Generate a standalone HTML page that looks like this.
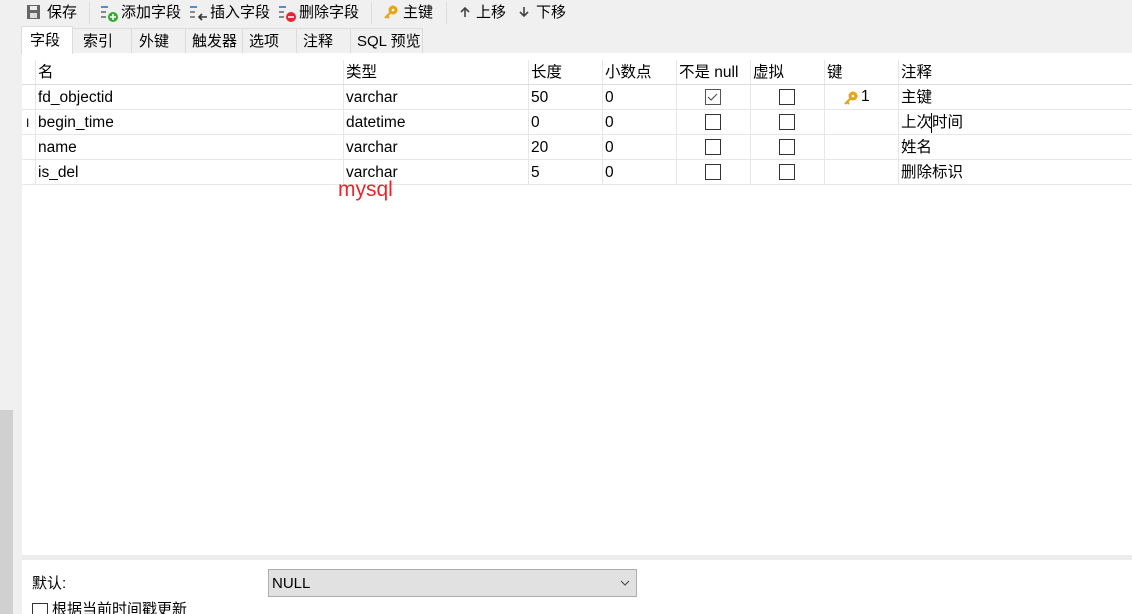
<!DOCTYPE html><html><head><meta charset="utf-8"><style>
html,body{margin:0;width:1132px;height:614px;overflow:hidden}
body{background:#f0f0f0;font-family:"Liberation Sans","Noto Sans CJK SC",sans-serif;font-size:15px;line-height:18px;color:#000;position:relative}
.a{position:absolute;white-space:nowrap}
.g{font-size:15.5px}
.tab{position:absolute;top:28px;height:25px;line-height:25px;border:1px solid #dcdcdc;border-bottom:none;background:#f0f0f0;padding-left:5px;box-sizing:border-box;overflow:hidden;white-space:nowrap}
.cb{position:absolute;width:14px;height:14px;border:1px solid #333;background:#fff}
.vl{position:absolute;top:60px;height:125px;width:1px;background:#e6e6e6}
.hl{position:absolute;left:22px;width:1110px;height:1px;background:#e6e6e6}
</style></head><body>
<div class="a" style="left:0;top:410px;width:13px;height:204px;background:#d0d0d0"></div>
<svg class="a" style="left:26px;top:4px" width="16" height="16"><rect x="1" y="1" width="13" height="14" fill="#666"/><rect x="4" y="2" width="7" height="4" fill="#eee"/><rect x="4" y="9" width="7" height="5" fill="#ddd"/></svg>
<div class="a" style="left:47px;top:4px">保存</div>
<div class="a" style="left:89px;top:2px;width:1px;height:22px;background:#ddd"></div>
<svg class="a" style="left:100px;top:4px" width="20" height="18"><rect x="1" y="2" width="7" height="2" fill="#4a90d9"/><rect x="1" y="7" width="5" height="2" fill="#888"/><rect x="1" y="12" width="5" height="2" fill="#888"/><circle cx="13" cy="13" r="5" fill="#3a3"/><path d="M10 13h6M13 10v6" stroke="#fff" stroke-width="1.6"/></svg>
<div class="a" style="left:121px;top:4px">添加字段</div>
<svg class="a" style="left:189px;top:4px" width="20" height="18"><rect x="1" y="2" width="7" height="2" fill="#4a90d9"/><rect x="1" y="7" width="5" height="2" fill="#888"/><rect x="1" y="12" width="5" height="2" fill="#888"/><path d="M18 13h-8M13 10l-3 3 3 3" stroke="#333" stroke-width="1.6" fill="none"/></svg>
<div class="a" style="left:210px;top:4px">插入字段</div>
<svg class="a" style="left:278px;top:4px" width="20" height="18"><rect x="1" y="2" width="7" height="2" fill="#4a90d9"/><rect x="1" y="7" width="5" height="2" fill="#888"/><rect x="1" y="12" width="5" height="2" fill="#888"/><circle cx="13" cy="13" r="5" fill="#e23"/><path d="M10 13h6" stroke="#fff" stroke-width="1.6"/></svg>
<div class="a" style="left:299px;top:4px">删除字段</div>
<div class="a" style="left:371px;top:2px;width:1px;height:22px;background:#ddd"></div>
<svg class="a" style="left:383px;top:4px" width="16" height="16"><circle cx="10" cy="6" r="4.5" fill="#e8a317"/><circle cx="10" cy="6" r="1.3" fill="#fff"/><path d="M7 9l-5 5M4 12l2 2" stroke="#e8a317" stroke-width="2.2"/></svg>
<div class="a" style="left:403px;top:4px">主键</div>
<div class="a" style="left:446px;top:2px;width:1px;height:22px;background:#ddd"></div>
<svg class="a" style="left:459px;top:6px" width="12" height="12"><path d="M6 11V2M2 6l4-4 4 4" stroke="#444" stroke-width="1.6" fill="none"/></svg>
<div class="a" style="left:476px;top:4px">上移</div>
<svg class="a" style="left:518px;top:6px" width="12" height="12"><path d="M6 1v9M2 6l4 4 4-4" stroke="#444" stroke-width="1.6" fill="none"/></svg>
<div class="a" style="left:536px;top:4px">下移</div>
<div class="tab" style="left:21px;top:26px;height:28px;line-height:27px;width:52px;background:#fff;border-color:#ddd;z-index:2;padding-left:8px">字段</div>
<div class="tab" style="left:72px;width:60px;padding-left:10px">索引</div>
<div class="tab" style="left:131px;width:55px;padding-left:7px">外键</div>
<div class="tab" style="left:185px;width:58px;padding-left:6px">触发器</div>
<div class="tab" style="left:242px;width:55px;padding-left:6px">选项</div>
<div class="tab" style="left:296px;width:55px;padding-left:6px">注释</div>
<div class="tab" style="left:350px;width:73px;padding-left:6px">SQL 预览</div>
<div class="a" style="left:22px;top:53px;width:1110px;height:502px;background:#fff"></div>
<div class="a" style="left:22px;top:555px;width:1110px;height:5px;background:#ececec"></div>
<div class="a" style="left:22px;top:560px;width:1110px;height:54px;background:#fff"></div>
<div class="vl" style="left:35px"></div><div class="vl" style="left:343px"></div><div class="vl" style="left:528px"></div><div class="vl" style="left:602px"></div><div class="vl" style="left:676px"></div><div class="vl" style="left:750px"></div><div class="vl" style="left:824px"></div><div class="vl" style="left:898px"></div>
<div class="hl" style="top:84px;background:#ddd"></div><div class="hl" style="top:109px"></div><div class="hl" style="top:134px"></div><div class="hl" style="top:159px"></div><div class="hl" style="top:184px"></div>
<div class="g">
<div class="a" style="left:38px;top:64px">名</div><div class="a" style="left:346px;top:64px">类型</div><div class="a" style="left:531px;top:64px">长度</div><div class="a" style="left:605px;top:64px">小数点</div><div class="a" style="left:679px;top:64px">不是 null</div><div class="a" style="left:753px;top:64px">虚拟</div><div class="a" style="left:827px;top:64px">键</div><div class="a" style="left:901px;top:64px">注释</div>
<div class="a" style="left:38px;top:89px">fd_objectid</div><div class="a" style="left:346px;top:89px">varchar</div><div class="a" style="left:531px;top:89px">50</div><div class="a" style="left:605px;top:89px">0</div><div class="a" style="left:901px;top:89px">主键</div>
<div class="a" style="left:26px;top:114px;font-size:12px">I</div>
<div class="a" style="left:38px;top:114px">begin_time</div><div class="a" style="left:346px;top:114px">datetime</div><div class="a" style="left:531px;top:114px">0</div><div class="a" style="left:605px;top:114px">0</div><div class="a" style="left:901px;top:114px">上次时间</div>
<div class="a" style="left:38px;top:139px">name</div><div class="a" style="left:346px;top:139px">varchar</div><div class="a" style="left:531px;top:139px">20</div><div class="a" style="left:605px;top:139px">0</div><div class="a" style="left:901px;top:139px">姓名</div>
<div class="a" style="left:38px;top:164px">is_del</div><div class="a" style="left:346px;top:164px">varchar</div><div class="a" style="left:531px;top:164px">5</div><div class="a" style="left:605px;top:164px">0</div><div class="a" style="left:901px;top:164px">删除标识</div>
<div class="a" style="left:861px;top:88px">1</div>
</div>
<div class="a" style="left:931px;top:113px;width:1px;height:20px;background:#000"></div>
<div class="cb" style="left:705px;top:89px;border-color:#555"></div>
<svg class="a" style="left:707px;top:92px" width="12" height="10"><path d="M1 5l3 3 6-6" stroke="#555" stroke-width="1.2" fill="none"/></svg>
<div class="cb" style="left:705px;top:114px"></div><div class="cb" style="left:705px;top:139px"></div><div class="cb" style="left:705px;top:164px"></div>
<div class="cb" style="left:779px;top:89px"></div><div class="cb" style="left:779px;top:114px"></div><div class="cb" style="left:779px;top:139px"></div><div class="cb" style="left:779px;top:164px"></div>
<svg class="a" style="left:843px;top:90px" width="16" height="16"><circle cx="10" cy="6" r="4.5" fill="#e8a317"/><circle cx="10" cy="6" r="1.3" fill="#fff"/><path d="M7 9l-5 5M4 12l2 2" stroke="#e8a317" stroke-width="2.2"/></svg>
<div class="a" style="left:338px;top:178px;color:#e8262b;font-size:21px;line-height:24px">mysql</div>
<div class="a" style="left:32px;top:575px">默认:</div>
<div class="a" style="left:268px;top:569px;width:369px;height:28px;background:#e1e1e1;border:1px solid #adadad;box-sizing:border-box"></div>
<div class="a" style="left:272px;top:575px">NULL</div>
<svg class="a" style="left:620px;top:579px" width="10" height="8"><path d="M1 2l4 4 4-4" stroke="#444" fill="none"/></svg>
<div class="cb" style="left:32px;top:603px"></div>
<div class="a" style="left:52px;top:601px">根据当前时间戳更新</div>
</body></html>
